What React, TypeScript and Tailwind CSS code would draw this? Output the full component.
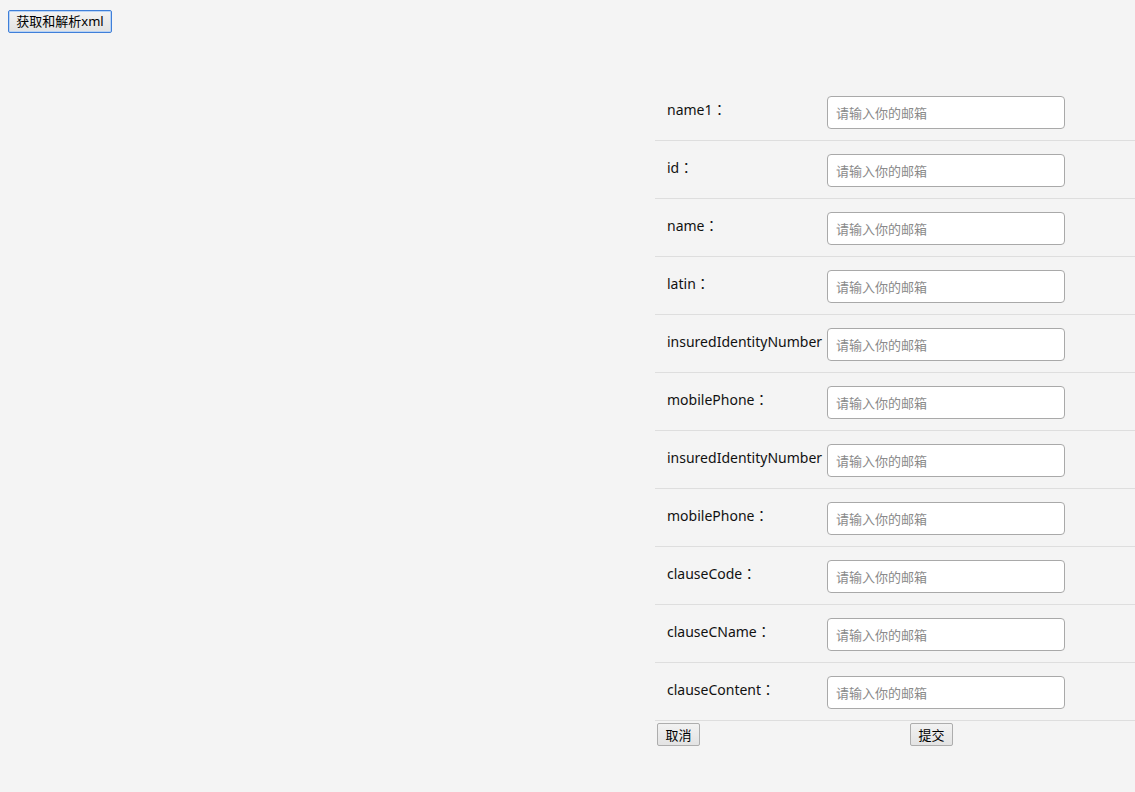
import React from "react";

const fields = [
  "name1",
  "id",
  "name",
  "latin",
  "insuredIdentityNumber",
  "mobilePhone",
  "insuredIdentityNumber",
  "mobilePhone",
  "clauseCode",
  "clauseCName",
  "clauseContent",
];

const font = { fontFamily: '"Noto Sans", "Noto Sans CJK SC", sans-serif' };
const colonFont = { fontFamily: '"Noto Sans CJK JP", "Noto Sans CJK TC", sans-serif' };

function Btn({ children, className = "" }: { children: React.ReactNode; className?: string }) {
  return (
    <button
      className={`h-[23px] w-[43px] border border-[#adadad] rounded-[2px] bg-gradient-to-b from-[#f2f2f2] to-[#e3e3e3] text-[13px] leading-[18px] text-black ${className}`}
      style={font}
    >
      {children}
    </button>
  );
}

export default function App() {
  return (
    <div className="min-h-[792px] bg-[#f4f4f4] text-[#222]" style={font}>
      <div className="pt-[8px] pl-[8px] h-[31px]">
        <button className="h-[23px] w-[104px] border border-[#3f7fd9] rounded-[2px] bg-gradient-to-b from-[#f3f3f3] to-[#e2e2e2] shadow-[inset_0_0_0_1px_#b8d3f5] text-[13px] leading-[18px] text-black">
          获取和解析xml
        </button>
      </div>
      <div className="ml-auto w-[480px] mt-[52px]">
        {fields.map((f, i) => (
          <div key={i} className="flex h-[58px] border-b border-[#dedede] items-start">
            <div className="w-[172px] shrink-0 pl-[12px] pt-[16px] text-[14px] leading-[20px] whitespace-nowrap text-[#111]">
              {f}
              <span style={colonFont}>：</span>
            </div>
            <input
              className="relative mt-[13px] w-[238px] h-[33px] rounded-[4px] border border-[#a9a9a9] bg-white px-[8px] text-[13px] placeholder:text-[#8a8a8a] outline-none"
              placeholder="请输入你的邮箱"
              style={font}
            />
          </div>
        ))}
        <div className="flex pt-[2px] pl-[2px]">
          <Btn>取消</Btn>
          <Btn className="ml-[210px]">提交</Btn>
        </div>
      </div>
    </div>
  );
}
